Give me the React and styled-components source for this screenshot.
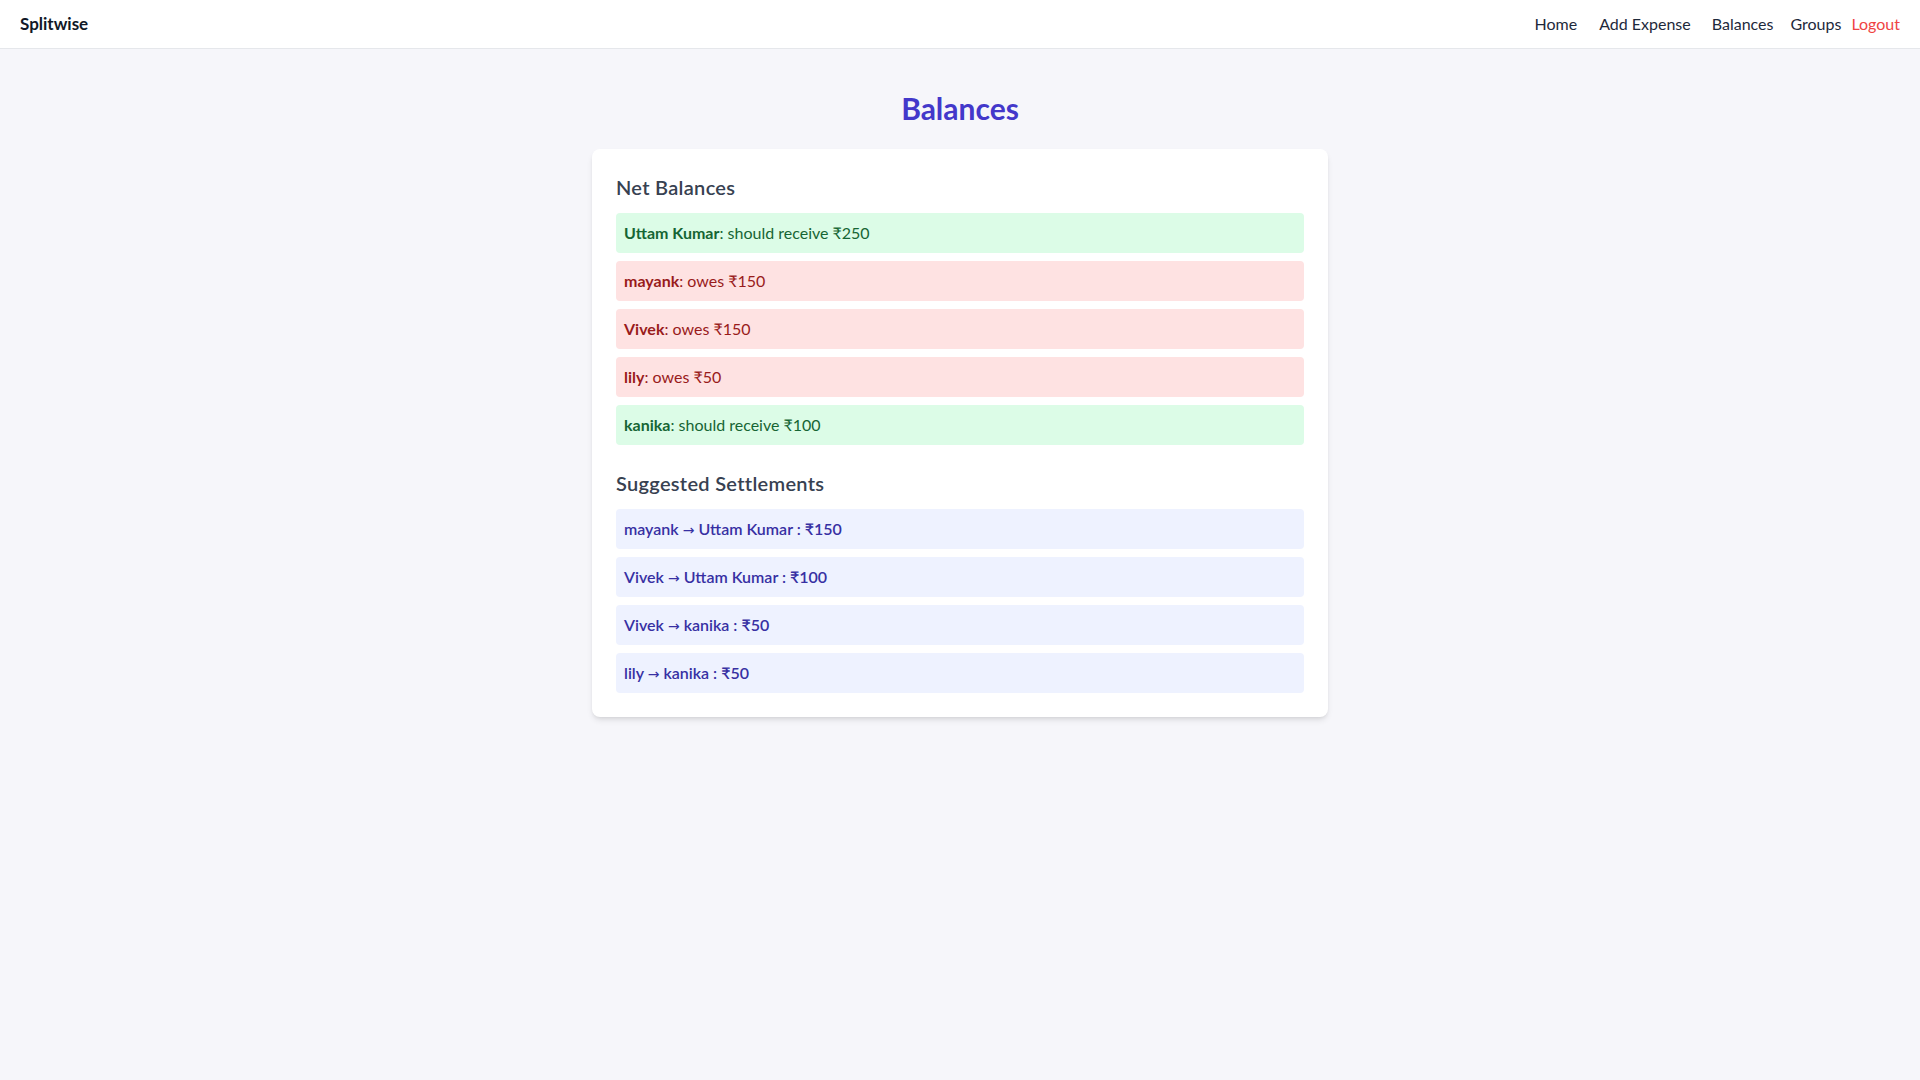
import React from "react";
import styled, { createGlobalStyle } from "styled-components";

const balances = [
  { name: "Uttam Kumar", amount: 250 },
  { name: "mayank", amount: -150 },
  { name: "Vivek", amount: -150 },
  { name: "lily", amount: -50 },
  { name: "kanika", amount: 100 },
];

const settlements = [
  { from: "mayank", to: "Uttam Kumar", amount: 150 },
  { from: "Vivek", to: "Uttam Kumar", amount: 100 },
  { from: "Vivek", to: "kanika", amount: 50 },
  { from: "lily", to: "kanika", amount: 50 },
];

const navLinks = [
  { label: "Home", space: 0 },
  { label: "Add Expense", space: 22 },
  { label: "Balances", space: 21 },
  { label: "Groups", space: 17 },
];

const App = () => {
  return (
    <>
      <GlobalStyle />
      <Navbar>
        <Brand>Splitwise</Brand>
        <NavLinks>
          {navLinks.map((link) => (
            <NavLink key={link.label} $space={link.space}>
              {link.label}
            </NavLink>
          ))}
          <LogoutButton>Logout</LogoutButton>
        </NavLinks>
      </Navbar>

      <Main>
        <PageTitle>Balances</PageTitle>
        <Card>
          <Section>
            <SectionTitle>Net Balances</SectionTitle>
            <List>
              {balances.map((item) => (
                <BalanceRow key={item.name} $positive={item.amount > 0}>
                  <strong>{item.name}</strong>:{" "}
                  {item.amount > 0
                    ? `should receive ₹${item.amount}`
                    : `owes ₹${Math.abs(item.amount)}`}
                </BalanceRow>
              ))}
            </List>
          </Section>

          <Section>
            <SectionTitle>Suggested Settlements</SectionTitle>
            <List>
              {settlements.map((s, index) => (
                <SettlementRow key={index}>
                  {s.from} <Arrow>→</Arrow> {s.to} : ₹{s.amount}
                </SettlementRow>
              ))}
            </List>
          </Section>
        </Card>
      </Main>
    </>
  );
};

export default App;

const GlobalStyle = createGlobalStyle`
  * {
    box-sizing: border-box;
  }
  body {
    margin: 0;
    background: #f6f6fa;
    font-family: Lato, "Noto Sans", sans-serif;
    color: #1f2937;
  }
`;

const Navbar = styled.nav`
  display: flex;
  align-items: center;
  justify-content: space-between;
  height: 49px;
  padding: 0 20px;
  background: #ffffff;
  border-bottom: 1px solid #e5e7eb;
`;

const Brand = styled.div`
  font-size: 17px;
  font-weight: 700;
  line-height: 28px;
  color: #111827;
`;

const NavLinks = styled.div`
  display: flex;
  align-items: center;
`;

const NavLink = styled.a`
  margin-left: ${(p) => p.$space}px;
  font-size: 16px;
  line-height: 24px;
  color: #1e293b;
  text-decoration: none;
  cursor: pointer;
`;

const LogoutButton = styled.button`
  margin-left: 10px;
  padding: 0;
  border: none;
  background: none;
  font-family: inherit;
  font-size: 16px;
  line-height: 24px;
  color: #ef4444;
  cursor: pointer;
`;

const Main = styled.main`
  max-width: 768px;
  margin: 0 auto;
  padding: 41px 16px;
`;

const PageTitle = styled.h1`
  margin: 0 0 23px;
  text-align: center;
  font-size: 30px;
  line-height: 36px;
  font-weight: 700;
  color: #4338ca;
`;

const Card = styled.div`
  padding: 24px;
  background: #ffffff;
  border-radius: 8px;
  box-shadow: 0 4px 6px -1px rgba(0, 0, 0, 0.1), 0 2px 4px -2px rgba(0, 0, 0, 0.1);
`;

const Section = styled.section`
  & + & {
    margin-top: 24px;
  }
`;

const SectionTitle = styled.h2`
  margin: 0 0 12px;
  font-size: 20px;
  line-height: 28px;
  font-weight: 600;
  letter-spacing: 0.3px;
  color: #374151;
`;

const List = styled.ul`
  display: flex;
  flex-direction: column;
  gap: 8px;
  margin: 0;
  padding: 0;
  list-style: none;
`;

const BalanceRow = styled.li`
  padding: 8px;
  border-radius: 4px;
  font-size: 16px;
  line-height: 24px;
  background: ${(p) => (p.$positive ? "#dcfce7" : "#fee2e2")};
  color: ${(p) => (p.$positive ? "#166534" : "#991b1b")};

  strong {
    font-weight: 700;
  }
`;

const SettlementRow = styled.li`
  padding: 8px;
  border-radius: 4px;
  font-size: 16px;
  line-height: 24px;
  font-weight: 600;
  background: #eef2ff;
  color: #3730a3;
`;

const Arrow = styled.span`
  font-family: "DejaVu Sans", sans-serif;
  font-size: 14px;
  font-weight: 400;
  line-height: 0;
`;
